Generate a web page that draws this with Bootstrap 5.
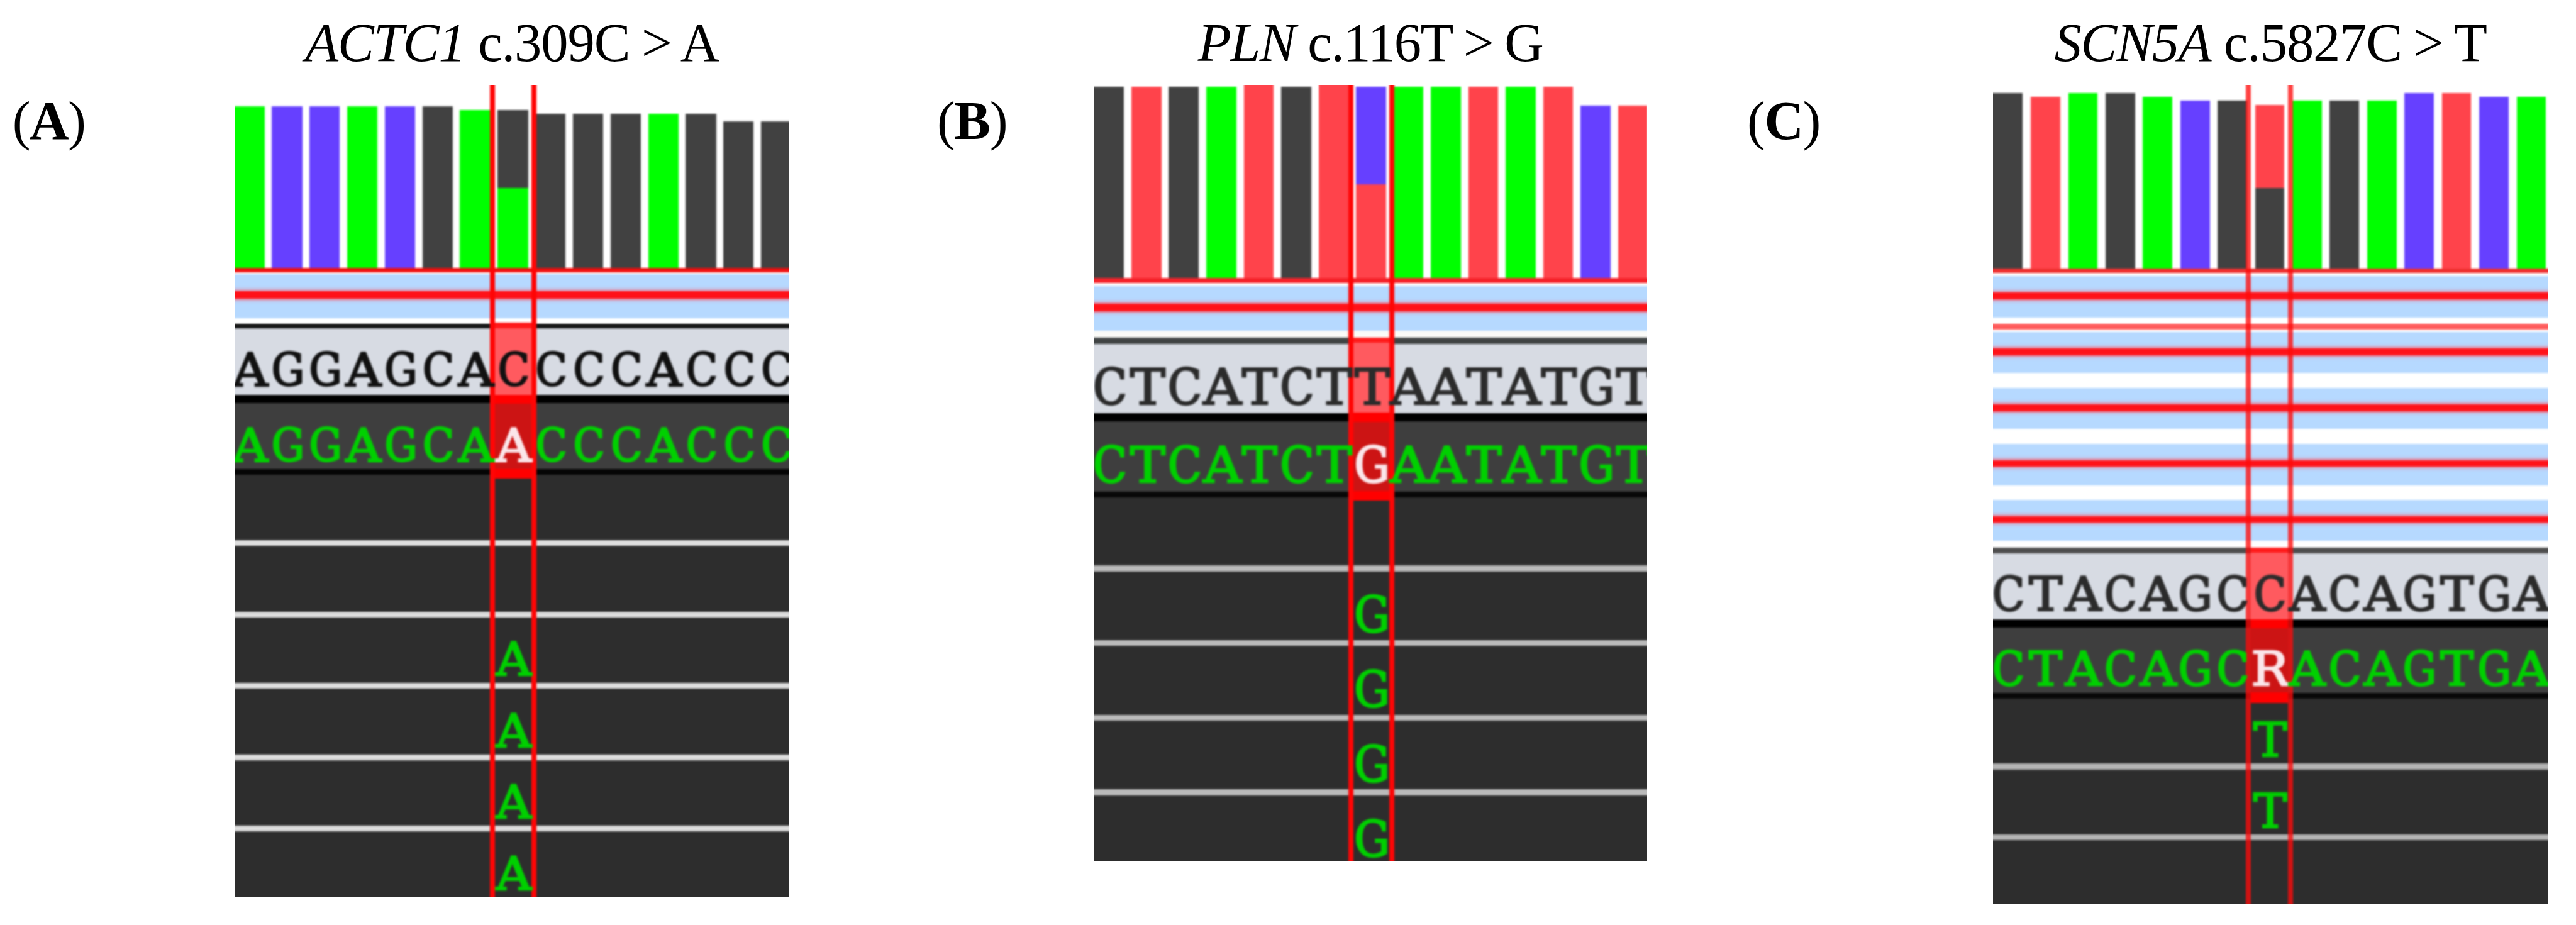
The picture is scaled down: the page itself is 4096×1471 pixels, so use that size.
<!DOCTYPE html>
<html lang="en">
<head>
    <meta charset="UTF-8">
    <meta name="viewport" content="width=device-width, initial-scale=1.0">
    <title>Variant read alignments</title>
    <link href="https://cdn.jsdelivr.net/npm/bootstrap@5.3.0/dist/css/bootstrap.min.css" rel="stylesheet">

    <style>
        /* One drawing unit: the figure is 4162 units wide */
        :root {
            --u: calc(100vw / 4162);
        }

        body {
            background: #fff;
            color: #000;
            overflow: hidden;
            font-family: "Liberation Serif", serif;
            font-size: calc(88 * var(--u));
        }

        .figure-label {
            line-height: calc(391 * var(--u));
            letter-spacing: calc(-1.5 * var(--u));
        }

        .figure-title {
            height: calc(136.7 * var(--u));
            line-height: calc(139.5 * var(--u));
        }

        .gt {
            margin: 0 calc(-2 * var(--u));
        }

        /* Viewer window, clips everything that runs over its edge */
        .viewer {
            overflow: hidden;
        }

        .soft {
            filter: blur(calc(1.7 * var(--u)));
        }

        .strip {
            margin: 0 calc(-10 * var(--u));
            padding: 0 calc(10 * var(--u));
            white-space: nowrap;
        }

        /* Read line with its pale halo on the blue band */
        .strip-line {
            position: relative;
            box-shadow: 0 0 calc(7 * var(--u)) calc(1 * var(--u)) #ff5a6a;
        }

        .cov-bar:first-child {
            box-shadow: calc(-8 * var(--u)) 0 0 currentColor;
        }

        /* Bases */
        .bases {
            position: relative;
            z-index: 2;
            font-family: "DejaVu Serif", serif;
            -webkit-text-stroke: calc(2.6 * var(--u)) currentColor;
        }

        .base-narrow {
            font-family: "DejaVu Serif Condensed", "DejaVu Serif", serif;
            font-stretch: condensed;
        }

        .base-wide {
            transform: scaleX(1.07);
        }

        .base-cell {
            display: flex;
            justify-content: center;
        }

        .bases-called {
            color: #00d000;
        }

        .bases-called .base-hit {
            color: #fbe6ea;
        }

        /* Vertical guides round the variant column */
        .guide {
            top: calc(-10 * var(--u));
            bottom: calc(-10 * var(--u));
            z-index: 1;
            border: solid red;
            border-width: 0 calc(8.5 * var(--u));
        }
    </style>
</head>
<body>

    <main class="d-flex align-items-start" id="figure"></main>

    <script src="https://cdn.jsdelivr.net/npm/bootstrap@5.3.0/dist/js/bootstrap.bundle.min.js"></script>
    <script>
        const BAR = { g: "#00ff00", b: "#6640ff", k: "#414141", r: "#ff434b" };
        const TOP = 136.7;
        const BLUE = "#b6d9ff", RED = "#ff1219", DARK = "#2d2d2d";

        // Strips are [bottom edge, colour, bases, centre of the bases, kind]
        const panels = [
            {
                label: "A", gene: "ACTC1", change: "c.309C", to: "A", spacing: -1.1,
                labelWidth: 379, pad: 20, width: 896.5,
                pitch: 60.8, bar: 49, first: -0.5, shift: -4.5, size: 74,
                bars: "gbbgbkgkkkkgkkk",
                tops: [171.5, 171.5, 171.5, 171.5, 171.5, 171.5, 178, 178, 184, 184, 184, 184, 184, 196, 196],
                split: [304, "g"], base: 433,
                guide: [412.5, 75.5], guideColor: "#ff0505", hit: [521, 530, 638, 652, 758, 773], ink: "#111",
                strips: [
                    [439.5, "#f00d0d"], [443, "#fff"], [470.5, BLUE], [482.5, RED], [514, BLUE], [523, "#fff"],
                    [530.5, "#111"], [638.5, "#d7dbe3", "AGGAGCACCCCACCC", 598, "ref"],
                    [651.5, "#000"], [758.5, "#3e3e3e", "AGGAGCAACCCACCC", 720, "called"], [767.5, "#050505"],
                    [873, DARK], [882, "#dedede"], [988.7, DARK], [997.7, "#dedede"],
                    [1104, DARK, "       A", 1065, "read"], [1113, "#dedede"],
                    [1219.5, DARK, "       A", 1181, "read"], [1228.5, "#dedede"],
                    [1334.5, DARK, "       A", 1296, "read"], [1343.5, "#dedede"],
                    [1450.5, DARK, "       A", 1411.5, "read"]
                ]
            },
            {
                label: "B", gene: "PLN", change: "c.116T", to: "G", spacing: -1.5,
                labelWidth: 492, pad: 238.5, width: 893.3,
                pitch: 60.5, bar: 48.5, first: 0, shift: -4.5, size: 80,
                bars: "krkgrkrbggrgrbr",
                tops: [140, 140, 140, 140, 130, 140, 130, 140, 140, 140, 140, 140, 140, 171, 171],
                split: [298, "r"], base: 449.5,
                guide: [410.7, 75], guideColor: "#ff0505", hit: [546, 554, 667, 682, 794, 809], ink: "#2b2b2b",
                strips: [
                    [457.5, "#f5222a"], [462, "#fff"], [490.5, BLUE], [503, RED], [535, BLUE], [546, "#fbfbf8"],
                    [555.5, "#3f4343"], [667.5, "#d7dbe3", "CTCATCTTAATATGT", 625, "ref"],
                    [680.5, "#000"], [794.5, "#3e3e3e", "CTCATCTGAATATGT", 751.5, "called"], [803.5, "#080808"],
                    [914, DARK], [923.5, "#bababa"],
                    [1034.5, DARK, "       G", 993.5, "read"], [1044, "#bababa"],
                    [1155.2, DARK, "       G", 1114.5, "read"], [1164.7, "#bababa"],
                    [1275.8, DARK, "       G", 1235, "read"], [1285.3, "#bababa"],
                    [1392, DARK, "       G", 1355.5, "read"]
                ]
            },
            {
                label: "C", gene: "SCN5A", change: "c.5827C", to: "T", spacing: -1.2,
                labelWidth: 559, pad: 162, width: 897,
                pitch: 60.4, bar: 47.5, first: 1, shift: -6, size: 76,
                bars: "krgkgbkrgkgbrbg",
                tops: [150.5, 156.5, 150.5, 150.5, 156.5, 162.5, 162.5, 169.5, 162.5, 162.5, 162.5, 150.5, 150.5, 156.5, 156.5],
                split: [303.5, "k"], base: 434,
                guide: [408.5, 76.5], guideColor: "rgba(255, 10, 10, .78)", hit: [885, 893, 1001, 1015, 1119, 1136], ink: "#2b2b2b",
                strips: [
                    [441.5, "#ee3030"], [446.5, "#fff"], [472.5, BLUE], [483.5, RED], [513, BLUE], [523.5, "#fff"],
                    [532, "#ff5b5b"], [536.5, "#fff"], [562.8, BLUE], [574, RED], [603, BLUE], [627, "#fff"],
                    [653.3, BLUE], [664.5, RED], [693, BLUE], [717.5, "#fff"],
                    [743.5, BLUE], [754.5, RED], [785, BLUE], [808, "#fff"],
                    [834, BLUE], [845, RED], [874, BLUE], [885, "#fff"],
                    [894, "#4c4c4c"], [1001, "#d7dbe3", "CTACAGCCACAGTGA", 960.5, "ref"],
                    [1014.5, "#000"], [1119.5, "#3e3e3e", "CTACAGCRACAGTGA", 1081.5, "called"], [1129.5, "#080808"],
                    [1234, DARK, "       T", 1196.5, "read"], [1243.5, "#b4b4b4"],
                    [1348.5, DARK, "       T", 1311, "read"], [1358, "#b4b4b4"],
                    [1460.5, DARK]
                ]
            }
        ];

        const u = n => `calc(${Math.round(n * 100) / 100} * var(--u))`;

        // Coverage histogram; the variant column is split in two colours
        function coverage(p) {
            let html = "";
            [...p.bars].forEach((c, i) => {
                const color = BAR[c];
                let fill = color;
                if (i === 7) {
                    const cut = u(p.split[0] - p.tops[i]);
                    fill = `linear-gradient(${color} ${cut}, ${BAR[p.split[1]]} ${cut})`;
                }
                html += `<div class="cov-bar flex-shrink-0" style="width:${u(p.bar)};margin-right:${u(p.pitch - p.bar)};height:${u(p.base - p.tops[i])};color:${color};background:${fill}"></div>`;
            });
            return `<div class="d-flex align-items-end" style="height:${u(p.base - TOP)};margin-left:${u(p.first)}">${html}</div>`;
        }

        function bases(p, top, text, centre, kind) {
            let html = "";
            [...text].forEach((c, i) => {
                const shape = "CG".includes(c) ? " base-narrow" : " base-wide";
                const hit = i === 7 && kind === "called" ? " base-hit" : "";
                html += `<span class="base-cell flex-shrink-0${shape}${hit}" style="width:${u(p.pitch)}">${c}</span>`;
            });
            const tone = kind === "ref" ? `color:${p.ink};` : "";
            return `<div class="bases d-flex ${kind === "ref" ? "" : "bases-called"}" style="${tone}font-size:${u(p.size)};line-height:${u((centre - top) * 2 + 2)};margin-left:${u(p.first + p.shift)}">${html}</div>`;
        }

        function strips(p) {
            let top = p.base;
            let html = "";
            p.strips.forEach(([bottom, color, text, centre, kind], i) => {
                // the last strip runs on under the clipped edge
                const extra = i === p.strips.length - 1 ? 10 : 0;
                html += `<div class="strip${color === RED ? " strip-line" : ""}" style="height:${u(bottom - top + extra)};background:${color}">${text ? bases(p, top, text, centre, kind) : ""}</div>`;
                top = bottom;
            });
            return html;
        }

        function guide(p) {
            const colors = ["transparent", "#ff1a1a", "#ff5a5f", "#ff0000", "#cc1414", "#ff0000"];
            let top = TOP - 10;
            let html = "";
            p.hit.forEach((y, i) => {
                html += `<div style="height:${u(y - top)};background:${colors[i]}"></div>`;
                top = y;
            });
            return `<div class="guide position-absolute" style="left:${u(p.guide[0])};width:${u(p.guide[1])};border-color:${p.guideColor}">${html}</div>`;
        }

        document.getElementById("figure").innerHTML = panels.map(p => {
            const end = p.strips[p.strips.length - 1][0];
            return `
                <div class="figure-label flex-shrink-0" style="width:${u(p.labelWidth)};padding-left:${u(p.pad)}">(<b>${p.label}</b>)</div>
                <section class="flex-shrink-0" style="width:${u(p.width)}">
                    <div class="figure-title text-center text-nowrap" style="letter-spacing:${u(p.spacing)}"><i>${p.gene}</i> ${p.change} <span class="gt">&gt;</span> ${p.to}</div>
                    <div class="viewer" style="height:${u(end - TOP)}">
                        <div class="soft position-relative">
                            ${coverage(p)}
                            ${strips(p)}
                            ${guide(p)}
                        </div>
                    </div>
                </section>`;
        }).join("");
    </script>

</body>
</html>
